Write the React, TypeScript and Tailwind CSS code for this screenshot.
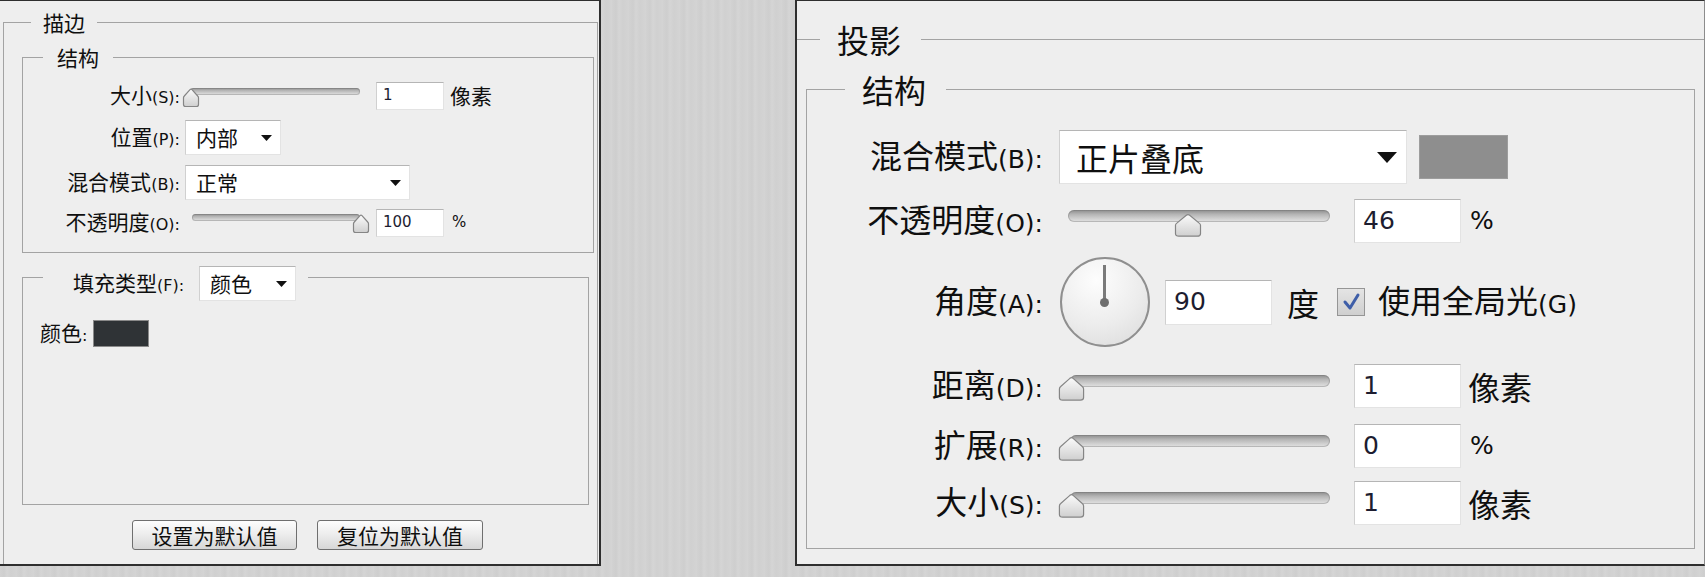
import React from "react";

const LAT = "font-['DejaVu_Sans',sans-serif]";

function Caret({ big }: { big?: boolean }) {
  return big ? (
    <svg width="20" height="11" viewBox="0 0 20 11">
      <path d="M0 0H20L10 11Z" fill="#111" />
    </svg>
  ) : (
    <svg width="11" height="6" viewBox="0 0 11 6">
      <path d="M0 0H11L5.5 6Z" fill="#111" />
    </svg>
  );
}

function Label({ text, k, big }: { text: string; k: string; big?: boolean }) {
  return (
    <span className={big ? "text-[32px] leading-[36px] whitespace-nowrap" : "text-[21px] leading-[24px] whitespace-nowrap"}>
      {text}
      <span className={big ? LAT + " text-[25px]" : LAT + " text-[16px]"}>({k}):</span>
    </span>
  );
}

function Thumb({ className }: { className: string }) {
  return (
    <svg className={className} viewBox="0 0 18 21" preserveAspectRatio="none">
      <defs>
        <linearGradient id="thumbGrad" x1="0" y1="0" x2="0" y2="1">
          <stop offset="0" stopColor="#fbfbfb" />
          <stop offset="1" stopColor="#cfcfcf" />
        </linearGradient>
      </defs>
      <path
        d="M3.5 19.5Q1.5 19.5 1.5 17.5V10.8Q1.5 9.8 2.3 9L8 2.6Q9 1.6 10 2.6L15.7 9Q16.5 9.8 16.5 10.8V17.5Q16.5 19.5 14.5 19.5Z"
        fill="url(#thumbGrad)"
        stroke="#858585"
        strokeWidth="1.2"
        vectorEffect="non-scaling-stroke"
      />
    </svg>
  );
}

const track =
  "rounded-full bg-[linear-gradient(to_bottom,#8c8c8c,#b4b4b4_35%,#d2d2d2_75%,#e2e2e2)] shadow-[inset_0_0_0_1px_rgba(110,110,110,0.35)]";

const field = "bg-white border border-[#e3e3e3] border-t-[#b5b5b5] border-l-[#d0d0d0]";

function Box({ value, big }: { value: string; big?: boolean }) {
  return big ? (
    <div className={field + " w-[107px] h-[44px] pl-[8px] flex items-center shrink-0 " + LAT + " text-[25px] text-[#1d1d30]"}>{value}</div>
  ) : (
    <div className={field + " w-[68px] h-[28px] pl-[6px] flex items-center shrink-0 " + LAT + " text-[15px] text-[#1d1d30]"}>{value}</div>
  );
}

function SmallSelect({ text, className }: { text: string; className: string }) {
  return (
    <div className={field + " h-[35px] pl-[10px] pr-[8px] flex items-center justify-between shrink-0 text-[21px] " + className}>
      <span>{text}</span>
      <Caret />
    </div>
  );
}

function BigSlider({ thumb }: { thumb: "left" | "mid" }) {
  return thumb === "mid" ? (
    <div className="relative ml-[25px] w-[262px] h-[44px] shrink-0">
      <div className={"absolute inset-x-0 top-[11px] h-[12px] " + track} />
      <Thumb className="absolute left-[105px] top-[13px] w-[30px] h-[26px]" />
    </div>
  ) : (
    <div className="relative ml-[14px] w-[273px] h-[45px] shrink-0">
      <div className={"absolute left-[13px] right-0 top-[12px] h-[12px] " + track} />
      <Thumb className="absolute left-0 top-[12px] w-[29px] h-[27px]" />
    </div>
  );
}

function BigRow({ label, k, mt, value, unit }: { label: string; k: string; mt: string; value: string; unit: string }) {
  return (
    <div className={"flex items-center h-[45px] " + mt}>
      <div className="w-[236px] shrink-0 flex justify-end">
        <Label text={label} k={k} big />
      </div>
      <BigSlider thumb="left" />
      <div className="ml-[24px]">
        <Box value={value} big />
      </div>
      {unit === "%" ? (
        <span className={"ml-[9px] text-[25px] " + LAT}>%</span>
      ) : (
        <span className="ml-[7px] text-[32px] leading-[36px]">{unit}</span>
      )}
    </div>
  );
}

function StrokePanel() {
  return (
    <div className="w-[601px] h-[566px] shrink-0 bg-[#eeeeee] border-t border-r-2 border-b-2 border-[#2e2e2e] flex flex-col pt-[9px]">
      <fieldset className="flex-1 ml-[3px] mr-px border-l border-t border-r border-[#a3a3a3] flex flex-col">
        <legend className="ml-[27px] px-[12px] text-[21px] leading-[24px]">描边</legend>

        <fieldset className="mt-[11px] ml-[18px] mr-[3px] border border-[#a3a3a3] pb-[12px]">
          <legend className="ml-[20px] px-[14px] text-[21px] leading-[24px]">结构</legend>

          <div className="flex items-center h-[35px] mt-[9px]">
            <div className="w-[157px] shrink-0 flex justify-end">
              <Label text="大小" k="S" />
            </div>
            <div className="relative ml-[2px] w-[178px] h-[35px] shrink-0">
              <div className={"absolute left-[8px] right-0 top-[10px] h-[7px] " + track} />
              <Thumb className="absolute left-0 top-[9px] w-[18px] h-[21px]" />
            </div>
            <div className="ml-[16px]">
              <Box value="1" />
            </div>
            <span className="ml-[6px] text-[21px]">像素</span>
          </div>

          <div className="flex items-center h-[35px] mt-[7px]">
            <div className="w-[157px] shrink-0 flex justify-end">
              <Label text="位置" k="P" />
            </div>
            <SmallSelect text="内部" className="ml-[5px] w-[96px]" />
          </div>

          <div className="flex items-center h-[35px] mt-[10px]">
            <div className="w-[157px] shrink-0 flex justify-end">
              <Label text="混合模式" k="B" />
            </div>
            <SmallSelect text="正常" className="ml-[5px] w-[225px]" />
          </div>

          <div className="flex items-center h-[35px] mt-[5px]">
            <div className="w-[157px] shrink-0 flex justify-end">
              <Label text="不透明度" k="O" />
            </div>
            <div className="relative ml-[12px] w-[178px] h-[35px] shrink-0">
              <div className={"absolute left-0 right-[10px] top-[9px] h-[7px] " + track} />
              <Thumb className="absolute right-0 top-[8px] w-[18px] h-[21px]" />
            </div>
            <div className="ml-[6px]">
              <Box value="100" />
            </div>
            <span className={"ml-[8px] text-[15px] " + LAT}>%</span>
          </div>
        </fieldset>

        <fieldset className="mt-[12px] ml-[18px] mr-[8px] h-[240px] border border-[#a3a3a3]">
          <legend className="ml-[20px] pl-[30px] pr-[12px]">
            <div className="flex items-center h-[37px] -mb-[13px]">
              <Label text="填充类型" k="F" />
              <SmallSelect text="颜色" className="ml-[15px] w-[97px]" />
            </div>
          </legend>
          <div className="mt-[31px] pl-[17px] flex items-center h-[27px]">
            <span className="text-[21px] leading-[24px]">
              颜色<span className={LAT + " text-[16px]"}>:</span>
            </span>
            <div className="ml-[6px] w-[56px] h-[27px] bg-[#2f3336] border border-[#8a8a8a]" />
          </div>
        </fieldset>

        <div className="mt-[15px] flex gap-[20px] pl-[128px]">
          <button className="w-[165px] h-[30px] border border-[#6f6f6f] rounded-[3px] bg-[linear-gradient(#fdfdfd,#ececec_50%,#d7d7d7)] text-[21px] leading-none flex items-center justify-center">
            设置为默认值
          </button>
          <button className="w-[166px] h-[30px] border border-[#6f6f6f] rounded-[3px] bg-[linear-gradient(#fdfdfd,#ececec_50%,#d7d7d7)] text-[21px] leading-none flex items-center justify-center">
            复位为默认值
          </button>
        </div>
      </fieldset>
    </div>
  );
}

function ShadowPanel() {
  return (
    <div className="w-[910px] h-[566px] shrink-0 bg-[#eeeeee] border-t border-l-2 border-b-2 border-r border-[#2e2e2e] border-r-[#8c8c8c] flex flex-col pt-[20px]">
      <fieldset className="flex-1 border-t border-[#a3a3a3] flex flex-col">
        <legend className="ml-[23px] pl-[17px] pr-[20px] text-[32px] leading-[36px]">投影</legend>

        <fieldset className="mt-[14px] mx-[9px] h-[478px] border border-[#a3a3a3]">
          <legend className="ml-[38px] pl-[17px] pr-[20px] text-[32px] leading-[36px]">结构</legend>

          <div className="flex items-center h-[54px] mt-[23px]">
            <div className="w-[236px] shrink-0 flex justify-end">
              <Label text="混合模式" k="B" big />
            </div>
            <div className={field + " ml-[16px] w-[348px] h-[54px] pl-[16px] pr-[9px] flex items-center justify-between shrink-0 text-[32px]"}>
              <span>正片叠底</span>
              <Caret big />
            </div>
            <div className="ml-[12px] w-[89px] h-[44px] bg-[#8e8e8e] border border-[#9d9d9d] shrink-0" />
          </div>

          <div className="flex items-center h-[44px] mt-[15px]">
            <div className="w-[236px] shrink-0 flex justify-end">
              <Label text="不透明度" k="O" big />
            </div>
            <BigSlider thumb="mid" />
            <div className="ml-[24px]">
              <Box value="46" big />
            </div>
            <span className={"ml-[9px] text-[25px] " + LAT}>%</span>
          </div>

          <div className="flex items-center h-[90px] mt-[14px]">
            <div className="w-[236px] shrink-0 flex justify-end">
              <Label text="角度" k="A" big />
            </div>
            <div className="relative ml-[17px] w-[90px] h-[90px] shrink-0 rounded-full border-2 border-[#8f8f8f] bg-[radial-gradient(circle_at_40%_25%,#fdfdfd,#ececec_55%,#d9d9d9)]">
              <div className="absolute left-[41px] top-[6px] w-[3px] h-[38px] bg-[#7a7a7a]" />
              <div className="absolute left-[38px] top-[39px] w-[9px] h-[9px] rounded-full bg-[#6e6e6e]" />
            </div>
            <div className="ml-[15px]">
              <div className={field + " w-[107px] h-[45px] pl-[8px] flex items-center " + LAT + " text-[25px] text-[#1d1d30]"}>90</div>
            </div>
            <span className="ml-[15px] text-[32px] leading-[36px]">度</span>
            <div className="ml-[18px] w-[28px] h-[28px] shrink-0 border border-[#959595] bg-[linear-gradient(#e4e4e4,#cfcfcf)] p-[2px]">
              <svg viewBox="0 0 22 22" className="w-full h-full">
                <path d="M5 11 L10 17 L18 4" fill="none" stroke="#3e5ea8" strokeWidth="3" strokeLinecap="round" strokeLinejoin="round" />
              </svg>
            </div>
            <span className="ml-[13px] text-[32px] leading-[36px] whitespace-nowrap">
              使用全局光<span className={LAT + " text-[25px]"}>(G)</span>
            </span>
          </div>

          <BigRow label="距离" k="D" mt="mt-[16px]" value="1" unit="像素" />
          <BigRow label="扩展" k="R" mt="mt-[15px]" value="0" unit="%" />
          <BigRow label="大小" k="S" mt="mt-[12px]" value="1" unit="像素" />
        </fieldset>
      </fieldset>
    </div>
  );
}

export default function App() {
  return (
    <div className="w-[1705px] h-[577px] overflow-hidden flex items-start gap-[194px] bg-[#d2d2d2] bg-[repeating-linear-gradient(90deg,#d2d2d2_0px,#cecece_4px,#d5d5d5_7px,#d0d0d0_11px,#d4d4d4_17px)] text-[#0f0f0f] font-['Noto_Sans_CJK_SC',sans-serif]">
      <StrokePanel />
      <ShadowPanel />
    </div>
  );
}
